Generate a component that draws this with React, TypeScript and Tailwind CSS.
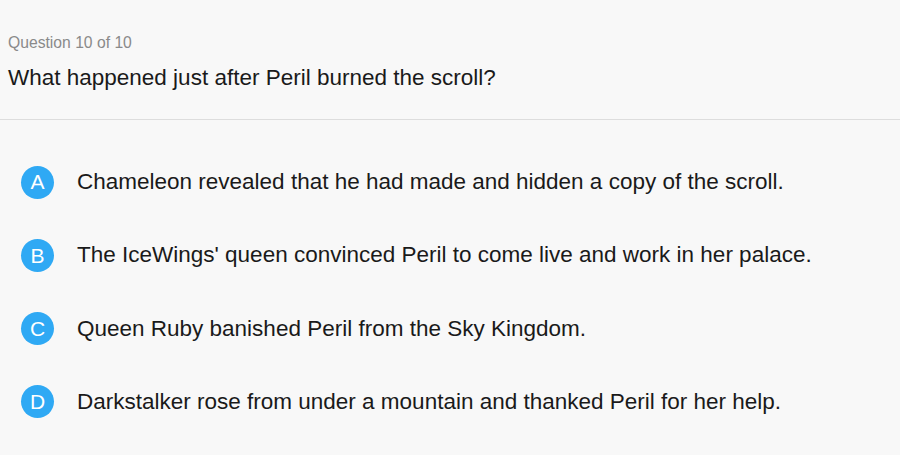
export default function App() {
  const options = [
    { letter: 'A', text: 'Chameleon revealed that he had made and hidden a copy of the scroll.' },
    { letter: 'B', text: "The IceWings' queen convinced Peril to come live and work in her palace." },
    { letter: 'C', text: 'Queen Ruby banished Peril from the Sky Kingdom.' },
    { letter: 'D', text: 'Darkstalker rose from under a mountain and thanked Peril for her help.' },
  ];

  return (
    <div className="w-[900px] h-[455px] bg-[#f8f8f8] font-['Liberation_Sans',Arial,sans-serif] overflow-hidden">
      {/* header */}
      <div className="px-2 pt-[34px] pb-[28px] border-b border-[#dddddd]">
        <div className="text-[15.7px] leading-[18px] text-[#8a8a8a]">Question 10 of 10</div>
        <div className="mt-[13px] text-[22.5px] leading-[26px] text-[#1a1a1a]">
          What happened just after Peril burned the scroll?
        </div>
      </div>

      {/* answers */}
      <div className="flex flex-col gap-[39.3px] pt-[45px] pl-[21px]">
        {options.map((opt) => (
          <div key={opt.letter} className="flex items-center h-[34px]">
            <div className="w-[33px] h-[33px] rounded-full bg-[#2fa9f4] text-white text-[21px] flex items-center justify-center shrink-0">
              {opt.letter}
            </div>
            <div className="ml-[23px] text-[22.5px] text-[#1a1a1a]">{opt.text}</div>
          </div>
        ))}
      </div>
    </div>
  );
}
